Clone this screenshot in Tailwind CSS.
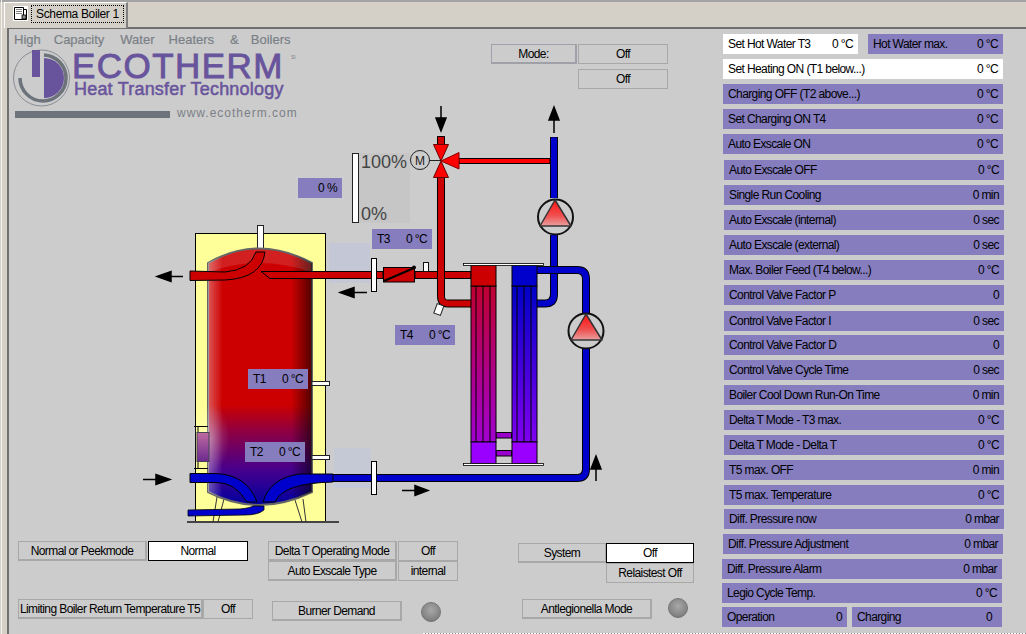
<!doctype html>
<html><head><meta charset="utf-8"><script src="https://cdn.jsdelivr.net/npm/@tailwindcss/browser@4"></script></head>
<body class="m-0 overflow-hidden bg-[#d4d0c8] font-['Liberation_Sans',Arial,sans-serif] text-[12px] tracking-[-.6px] whitespace-nowrap text-black">
<div class="relative w-[1026px] h-[634px] overflow-hidden">
  <div class="absolute left-0 top-0 w-full h-[2px] bg-[#a4a4a4]"></div>
  <div class="absolute left-[1px] top-0 w-[1px] h-full bg-[#f4f2ee]"></div>
  <div class="absolute left-[4px] top-[2px] w-[124px] h-[26px] z-10 bg-[#d4d0c8] border-l border-t border-r-2 border-white border-r-[#808080] flex items-start pt-[2px] pl-[8px] gap-[3px]">
    <svg width="15" height="15" viewBox="0 0 15 15" class="mt-[1px]"><rect width="15" height="15" fill="#fff"/><path d="M1.500 1.500 H10.500 V13.500 H1.500 Z" fill="#fff" stroke="#000"/><path d="M3 3.500 H9 M3 5.500 H9 M3 7.500 H9" stroke="#808080"/><path d="M10.500 3.500 H13.500 V13.500 H4" fill="none" stroke="#000"/><rect x="9" y="9" width="4" height="4" fill="#888" stroke="#000" stroke-width=".8"/></svg>
    <span class="border border-dotted border-black px-[4px] h-[18px] leading-[16px] tracking-[-.35px]">Schema Boiler 1</span>
  </div>
  <div class="absolute left-[7px] top-[27px] right-0 bottom-0 bg-[#cccccc] border-t-2 border-l-2 border-[#707070]"></div>
  <div class="absolute left-[423px] bottom-0 right-0 h-px bg-[repeating-linear-gradient(90deg,#ffffff_0,#ffffff_2px,#888888_2px,#888888_3px)]"></div>
  <svg class="absolute left-0 top-0" width="1026" height="634" viewBox="0 0 1026 634">
    <defs>
      <linearGradient id="tv" x1="0" y1="0" x2="0" y2="1">
        <stop offset="0" stop-color="#cc0000"/><stop offset=".61" stop-color="#cc0000"/><stop offset=".71" stop-color="#900040"/><stop offset=".86" stop-color="#48008c"/><stop offset="1" stop-color="#0000a0"/>
      </linearGradient>
      <linearGradient id="ts" x1="0" y1="0" x2="1" y2="0">
        <stop offset="0" stop-color="#fff" stop-opacity=".35"/><stop offset=".14" stop-color="#fff" stop-opacity="0"/><stop offset=".8" stop-color="#000" stop-opacity="0"/><stop offset="1" stop-color="#000" stop-opacity=".6"/>
      </linearGradient>
      <linearGradient id="hl" x1="0" y1="0" x2="0" y2="1"><stop offset="0" stop-color="#c00030"/><stop offset="1" stop-color="#a000d0"/></linearGradient>
      <linearGradient id="hr" x1="0" y1="0" x2="0" y2="1"><stop offset="0" stop-color="#0000c8"/><stop offset="1" stop-color="#8000f0"/></linearGradient>
      <linearGradient id="pump" x1="0" y1="0" x2="0" y2="1"><stop offset="0" stop-color="#ff1010"/><stop offset=".6" stop-color="#f05050"/><stop offset="1" stop-color="#e8a0a0"/></linearGradient>
      <linearGradient id="side" x1="0" y1="0" x2="0" y2="1"><stop offset="0" stop-color="#c06aa0"/><stop offset="1" stop-color="#6a2a90"/></linearGradient>
      <radialGradient id="led" cx=".5" cy=".4" r=".65"><stop offset="0" stop-color="#a8a8a8"/><stop offset=".75" stop-color="#848484"/><stop offset="1" stop-color="#707070"/></radialGradient>
      <radialGradient id="glow" cx=".5" cy=".5" r=".5"><stop offset="0" stop-color="#fff" stop-opacity=".28"/><stop offset="1" stop-color="#fff" stop-opacity="0"/></radialGradient>
    </defs>

    <!-- logo -->
    <circle cx="41.500" cy="78" r="28" fill="none" stroke="#777c85" stroke-width=".8"/>
    <path d="M20 78 A23 23 0 1 0 44 55" fill="none" stroke="#6c737a" stroke-width="3.500"/>
    <path d="M44 58 A20 20 0 0 1 44 98 Z" fill="#68549c"/>
    <rect x="32" y="50" width="8" height="27" fill="#68549c"/>
    <rect x="15" y="111" width="155" height="7" fill="#6c737a"/>

    <!-- % panel -->
    <rect x="359" y="153" width="51" height="70" fill="#c6c6c6"/>
    <rect x="352.500" y="153.500" width="6" height="69" fill="#fff" stroke="#222"/>

    <!-- tank housing -->
    <rect x="195.500" y="233.500" width="130" height="288" fill="#ffff99" stroke="#000"/>
    <line x1="187" y1="522" x2="339" y2="522" stroke="#444" stroke-width="2"/>
    <path d="M217 497 L213 522 M224 499 L218 522 M295 500 L302 522 M303 499 L306 522" stroke="#333" stroke-width="1" fill="none"/>
    <rect x="257.500" y="225.500" width="6" height="25" fill="#fff" stroke="#222"/>
    <path d="M208 263 Q258 234 312 263 L312 492 Q258 518 208 492 Z" fill="url(#tv)" stroke="#666" stroke-width="2"/>
    <path d="M208 263 Q258 234 312 263 L312 492 Q258 518 208 492 Z" fill="url(#ts)"/>
    <ellipse cx="210" cy="438" rx="20" ry="34" fill="url(#glow)"/>
    <path d="M209 263 Q258 236 311 263 L311 272 Q258 254 209 272 Z" fill="#fff" opacity=".12"/>

    <!-- side port -->
    <rect x="197" y="432.500" width="12" height="29" fill="url(#side)" stroke="#445"/>
    <path d="M194 426.500 H208 M194 468.500 H208 M198 427 V432 M198 462 V468" stroke="#000" stroke-width="1" fill="none"/>

    <!-- right sensors -->
    <rect x="312" y="381.500" width="17.500" height="4" fill="#fff" stroke="#222"/>
    <rect x="312" y="455.500" width="17.500" height="4" fill="#fff" stroke="#222"/>

    <!-- pale rects -->
    <rect x="329" y="243" width="41" height="40" fill="#c4c8d6"/>

    <!-- red pipes -->
    <path d="M190 271 L225 272 Q250 270 256 252 L265 252 Q262 278 225 280 L190 280.500 Z" fill="#cc0000" stroke="#000"/>
    <path d="M261 271.500 H383 V278.500 H270 Z" fill="#cc0000" stroke="#000"/>
    <path d="M415 271.500 H471 V278.500 H415 Z" fill="#cc0000" stroke="#000"/>
    <path d="M441 178 V296 Q441 303.500 448 303.500 H471" fill="none" stroke="#000" stroke-width="8"/>
    <path d="M441 178 V296 Q441 303.500 448 303.500 H471" fill="none" stroke="#cc0000" stroke-width="6"/>
    <rect x="423.500" y="262.500" width="5" height="9" fill="#fff" stroke="#111"/>
    <rect x="435.500" y="304.500" width="7" height="10" fill="#fff" stroke="#222" transform="rotate(20 439 309)"/>

    <!-- valve -->
    <rect x="383.500" y="267.500" width="31" height="14.500" fill="#cc0000" stroke="#000"/>
    <line x1="384" y1="281" x2="414" y2="268" stroke="#000" stroke-width="2"/>
    <circle cx="414" cy="267.500" r="2" fill="#000"/>

    <!-- flanges -->
    <rect x="371.500" y="258.500" width="5" height="33" fill="#fff" stroke="#000"/>

    <!-- mixing valve -->
    <rect x="437.500" y="136.500" width="7" height="8" fill="#cc0000" stroke="#000"/>
    <path d="M459 158.500 H550 V163.500 H459 Z" fill="#ff0000" stroke="#000"/>
    <path d="M433.500 144.500 H448.500 L441 161 Z" fill="#ff0000" stroke="#600"/>
    <path d="M433.500 177.500 H448.500 L441 161 Z" fill="#ff0000" stroke="#600"/>
    <path d="M459 152.500 V169 L441 161 Z" fill="#ff0000" stroke="#800"/>
    <line x1="429" y1="160.500" x2="441" y2="160.500" stroke="#222"/>
    <circle cx="420" cy="160" r="9.500" fill="#ccc" stroke="#222"/>
    <text x="420" y="164.500" text-anchor="middle" font-size="12" letter-spacing="0" fill="#222" font-family="Liberation Sans">M</text>

    <!-- blue pipes -->
    <path d="M554 137 V198" fill="none" stroke="#000" stroke-width="8"/>
    <path d="M554 137.500 V198" fill="none" stroke="#0000cc" stroke-width="6"/>
    <path d="M554 235 V294 Q554 303.500 545 303.500 H537" fill="none" stroke="#000" stroke-width="8"/>
    <path d="M554 235 V294 Q554 303.500 545 303.500 H537" fill="none" stroke="#0000cc" stroke-width="6"/>
    <path d="M537 270 H577 Q586 270 586 279 V313" fill="none" stroke="#000" stroke-width="8"/>
    <path d="M537 270 H577 Q586 270 586 279 V313" fill="none" stroke="#0000cc" stroke-width="6"/>
    <path d="M586 349 V469 Q586 478 577 478 H333" fill="none" stroke="#000" stroke-width="8"/>
    <path d="M586 349 V469 Q586 478 577 478 H333" fill="none" stroke="#0000cc" stroke-width="6"/>
    <path d="M333 474 H300 Q270 478 263 502 L275 502 Q283 483 333 482 Z" fill="#0000cc" stroke="#000"/>
    <path d="M190 473.500 H216 Q247 475 257 502 L247 502 Q235 482 216 482.500 H190 Z" fill="#0000cc" stroke="#000"/>
    <path d="M188 510 L240 509 Q250 508 253 506 H264 V510 Q258 515 245 515 L188 516 Z" fill="#0000cc" stroke="#000" stroke-width=".8"/>
    <rect x="334" y="448" width="37" height="40" fill="#c4c8d6" fill-opacity=".9"/>
    <path d="M334 478 H372" stroke="#000" stroke-width="8"/><path d="M334 478 H372" stroke="#0000cc" stroke-width="6"/>
    <rect x="371.500" y="461.500" width="5" height="33" fill="#fff" stroke="#000"/>

    <!-- heat exchanger -->
    <rect x="496" y="432.500" width="15.500" height="5.500" fill="#9900cc" stroke="#000"/>
    <rect x="496" y="450.500" width="15.500" height="5.500" fill="#9900cc" stroke="#000"/>
    <rect x="471" y="286" width="25" height="156" fill="url(#hl)" stroke="#000"/>
    <rect x="512" y="286" width="25" height="156" fill="url(#hr)" stroke="#000"/>
    <path d="M476 286 V442 M483 286 V442 M490 286 V442 M517 286 V442 M524 286 V442 M531 286 V442" stroke="#000" fill="none"/>
    <rect x="471" y="265.500" width="25" height="20.500" fill="#cc0000" stroke="#000"/>
    <rect x="512" y="265.500" width="25" height="20.500" fill="#0000cc" stroke="#000"/>
    <rect x="471" y="442" width="25" height="21.500" fill="#9900ff" stroke="#000"/>
    <rect x="512" y="442" width="25" height="21.500" fill="#9900ff" stroke="#000"/>
    <rect x="463.500" y="263.500" width="80" height="2" fill="#fff" stroke="#000" stroke-width=".8"/>
    <rect x="463.500" y="463.500" width="80" height="2" fill="#fff" stroke="#000" stroke-width=".8"/>

    <!-- pumps -->
    <g fill="#ccc" stroke="#111" stroke-width="2">
      <circle cx="555.500" cy="217" r="17.500"/>
      <circle cx="586" cy="331" r="17.500"/>
    </g>
    <path d="M555 200 L571 226 H540 Z" fill="url(#pump)" stroke="#333" stroke-width="1.500" stroke-linejoin="round"/>
    <path d="M586 314 L602 340 H571 Z" fill="url(#pump)" stroke="#333" stroke-width="1.500" stroke-linejoin="round"/>

    <!-- arrows -->
    <g fill="#000" stroke="#000" stroke-width="1.500">
      <path d="M183 276.500 H170" fill="none"/><path d="M157 276.500 L171 271.500 V281.500 Z"/>
      <path d="M367 292.500 H354" fill="none"/><path d="M340 292.500 L354 287.500 V297.500 Z"/>
      <path d="M143 479.500 H156" fill="none"/><path d="M170 479.500 L156 474.500 V484.500 Z"/>
      <path d="M402 490.500 H415" fill="none"/><path d="M428 490.500 L415 485.500 V495.500 Z"/>
      <path d="M441 106 V119" fill="none"/><path d="M441 131 L436 118 H446 Z"/>
      <path d="M554 133 V120" fill="none"/><path d="M554 107 L549 120 H559 Z"/>
      <path d="M596 481 V468" fill="none"/><path d="M596 456 L591 469 H601 Z"/>
    </g>

    <!-- LEDs -->
    <circle cx="431" cy="612" r="9.500" fill="url(#led)" stroke="#777"/>
    <circle cx="678" cy="608" r="9.500" fill="url(#led)" stroke="#777"/>
  </svg>

  <!-- logo text -->
  <div class="absolute left-[14px] top-[32px] flex text-[13px] leading-[15px] text-[#7b8087] tracking-normal [-webkit-text-stroke:.2px_#7b8087]"><span>High</span><span class="ml-[13px]">Capacity</span><span class="ml-[16px]">Water</span><span class="ml-[14px]">Heaters</span><span class="ml-[16px]">&amp;</span><span class="ml-[12px]">Boilers</span></div>
  <div class="absolute left-[72px] top-[52px] text-[35px] leading-[28px] text-[#68549c] tracking-[1.45px] [-webkit-text-stroke:.9px_#68549c]">ECOTHERM</div>
  <div class="absolute left-[74px] top-[80px] text-[18px] leading-[18px] text-[#68549c] tracking-[.2px] [-webkit-text-stroke:.5px_#68549c]">Heat Transfer Technology</div>
  <div class="absolute left-[177px] top-[106px] text-[12px] leading-[15px] text-[#7b8087] tracking-[1px]">www.ecotherm.com</div>
  <div class="absolute left-[291px] top-[54px] text-[5px] leading-[6px] text-[#7b8087] tracking-normal">SI</div>

  <!-- diagram labels -->
  <div class="absolute left-[361px] top-[151px] text-[18px] leading-[22px] text-[#444] tracking-normal">100%</div>
  <div class="absolute left-[361px] top-[203px] text-[18px] leading-[22px] text-[#444] tracking-normal">0%</div>
  <div class="absolute left-[298px] top-[178px] w-[44px] h-[20px] bg-[#857dbe] flex items-center justify-end pr-[5px]">0 %</div>
  <div class="absolute left-[372px] top-[229px] w-[60px] h-[20px] bg-[#857dbe] flex items-center justify-between px-[5px]"><span>T3</span><span>0 °C</span></div>
  <div class="absolute left-[395px] top-[325px] w-[60px] h-[20px] bg-[#857dbe] flex items-center justify-between px-[5px]"><span>T4</span><span>0 °C</span></div>
  <div class="absolute left-[248px] top-[369px] w-[60px] h-[20px] bg-[#857dbe] flex items-center justify-between px-[5px]"><span>T1</span><span>0 °C</span></div>
  <div class="absolute left-[245px] top-[442px] w-[60px] h-[20px] bg-[#857dbe] flex items-center justify-between px-[5px]"><span>T2</span><span>0 °C</span></div>

  <!-- mode -->
  <div class="absolute left-[491px] top-[44px] w-[86px] h-[20px] pt-px border border-b-2 border-r-2 border-[#a0a0a8] flex items-center justify-center">Mode:</div>
  <div class="absolute left-[578px] top-[44px] w-[90px] h-[20px] border border-[#a8a8a8] flex items-center justify-center">Off</div>
  <div class="absolute left-[578px] top-[69px] w-[90px] h-[20px] border border-[#a8a8a8] flex items-center justify-center">Off</div>

  <!-- bottom controls -->
  <div class="absolute left-[18px] top-[541px] w-[129px] h-[20px] pt-px border border-b-2 border-r-2 border-[#a8a8a8] flex items-center justify-center">Normal or Peekmode</div>
  <div class="absolute left-[148px] top-[541px] w-[100px] h-[20px] bg-white border border-black flex items-center justify-center">Normal</div>
  <div class="absolute left-[268px] top-[541px] w-[129px] h-[20px] pt-px border border-b-2 border-r-2 border-[#a8a8a8] flex items-center justify-center">Delta T Operating Mode</div>
  <div class="absolute left-[398px] top-[541px] w-[60px] h-[20px] border border-[#a8a8a8] flex items-center justify-center">Off</div>
  <div class="absolute left-[268px] top-[561px] w-[129px] h-[20px] pt-px border border-b-2 border-r-2 border-[#a8a8a8] flex items-center justify-center">Auto Exscale Type</div>
  <div class="absolute left-[398px] top-[561px] w-[60px] h-[20px] border border-[#a8a8a8] flex items-center justify-center">internal</div>
  <div class="absolute left-[18px] top-[599px] w-[185px] h-[20px] pt-px border border-b-2 border-r-2 border-[#a8a8a8] flex items-center justify-center">Limiting Boiler Return Temperature T5</div>
  <div class="absolute left-[203px] top-[599px] w-[50px] h-[20px] border border-[#a8a8a8] flex items-center justify-center">Off</div>
  <div class="absolute left-[272px] top-[601px] w-[130px] h-[20px] pt-px border border-b-2 border-r-2 border-[#a8a8a8] flex items-center justify-center">Burner Demand</div>
  <div class="absolute left-[518px] top-[543px] w-[88px] h-[20px] pt-px border border-b-2 border-[#a8a8a8] flex items-center justify-center">System</div>
  <div class="absolute left-[606px] top-[543px] w-[88px] h-[20px] bg-white border border-black flex items-center justify-center">Off</div>
  <div class="absolute left-[606px] top-[563px] w-[88px] h-[20px] border border-[#a8a8a8] flex items-center justify-center">Relaistest Off</div>
  <div class="absolute left-[522px] top-[599px] w-[130px] h-[20px] pt-px border border-b-2 border-r-2 border-[#a8a8a8] flex items-center justify-center">Antlegionella Mode</div>

  <!-- parameter column -->
  <div class="absolute left-[723px] top-[34px] w-[280px] flex flex-col">
    <div class="flex gap-[10px] h-[20px]"><div class="flex-1 bg-white flex items-center justify-between px-[5px]"><span>Set Hot Water T3</span><span>0 °C</span></div><div class="w-[135px] bg-[#857dbe] flex items-center justify-between px-[5px]"><span>Hot Water max.</span><span>0 °C</span></div></div>
    <div class="mt-[5px] h-[20px] bg-white flex items-center justify-between px-[5px]"><span>Set Heating ON (T1 below...)</span><span>0 °C</span></div>
    <div class="mt-[5px] h-[20px] bg-[#857dbe] flex items-center justify-between px-[5px]"><span>Charging OFF (T2 above...)</span><span>0 °C</span></div>
    <div class="mt-[5px] h-[20px] bg-[#857dbe] flex items-center justify-between px-[5px]"><span>Set Charging ON T4</span><span>0 °C</span></div>
    <div class="mt-[5px] h-[20px] bg-[#857dbe] flex items-center justify-between px-[5px]"><span>Auto Exscale ON</span><span>0 °C</span></div>
    <div class="mt-[6px] ml-[1px] -mr-[1px] h-[20px] bg-[#857dbe] flex items-center justify-between px-[5px]"><span>Auto Exscale OFF</span><span>0 °C</span></div>
    <div class="mt-[5px] ml-[1px] -mr-[1px] h-[20px] bg-[#857dbe] flex items-center justify-between px-[5px]"><span>Single Run Cooling</span><span>0 min</span></div>
    <div class="mt-[5px] ml-[1px] -mr-[1px] h-[20px] bg-[#857dbe] flex items-center justify-between px-[5px]"><span>Auto Exscale (internal)</span><span>0 sec</span></div>
    <div class="mt-[5px] ml-[1px] -mr-[1px] h-[20px] bg-[#857dbe] flex items-center justify-between px-[5px]"><span>Auto Exscale (external)</span><span>0 sec</span></div>
    <div class="mt-[5px] ml-[1px] -mr-[1px] h-[20px] bg-[#857dbe] flex items-center justify-between px-[5px]"><span>Max. Boiler Feed (T4 below...)</span><span>0 °C</span></div>
    <div class="mt-[5px] ml-[1px] -mr-[1px] h-[20px] bg-[#857dbe] flex items-center justify-between px-[5px]"><span>Control Valve Factor P</span><span>0</span></div>
    <div class="mt-[6px] ml-[1px] -mr-[1px] h-[20px] bg-[#857dbe] flex items-center justify-between px-[5px]"><span>Control Valve Factor I</span><span>0 sec</span></div>
    <div class="mt-[4px] ml-[1px] -mr-[1px] h-[20px] bg-[#857dbe] flex items-center justify-between px-[5px]"><span>Control Valve Factor D</span><span>0</span></div>
    <div class="mt-[5px] ml-[1px] -mr-[1px] h-[20px] bg-[#857dbe] flex items-center justify-between px-[5px]"><span>Control Valve Cycle Time</span><span>0 sec</span></div>
    <div class="mt-[5px] ml-[1px] -mr-[1px] h-[20px] bg-[#857dbe] flex items-center justify-between px-[5px]"><span>Boiler Cool Down Run-On Time</span><span>0 min</span></div>
    <div class="mt-[5px] ml-[1px] -mr-[1px] h-[20px] bg-[#857dbe] flex items-center justify-between px-[5px]"><span>Delta T Mode - T3 max.</span><span>0 °C</span></div>
    <div class="mt-[5px] ml-[1px] -mr-[1px] h-[20px] bg-[#857dbe] flex items-center justify-between px-[5px]"><span>Delta T Mode - Delta T</span><span>0 °C</span></div>
    <div class="mt-[5px] ml-[1px] -mr-[1px] h-[20px] bg-[#857dbe] flex items-center justify-between px-[5px]"><span>T5 max. OFF</span><span>0 min</span></div>
    <div class="mt-[5px] ml-[1px] -mr-[1px] h-[20px] bg-[#857dbe] flex items-center justify-between px-[5px]"><span>T5 max. Temperature</span><span>0 °C</span></div>
    <div class="mt-[4px] ml-[1px] -mr-[1px] h-[20px] bg-[#857dbe] flex items-center justify-between px-[5px]"><span>Diff. Pressure now</span><span>0 mbar</span></div>
    <div class="mt-[5px] h-[20px] bg-[#857dbe] flex items-center justify-between px-[5px]"><span>Diff. Pressure Adjustment</span><span>0 mbar</span></div>
    <div class="mt-[5px] -ml-[1px] mr-[1px] h-[20px] bg-[#857dbe] flex items-center justify-between px-[5px]"><span>Diff. Pressure Alarm</span><span>0 mbar</span></div>
    <div class="mt-[4px] -ml-[1px] mr-[1px] h-[20px] bg-[#857dbe] flex items-center justify-between px-[5px]"><span>Legio Cycle Temp.</span><span>0 °C</span></div>
    <div class="mt-[4px] -ml-[1px] mr-[1px] h-[20px] flex gap-[5px]"><div class="w-[125px] bg-[#857dbe] flex items-center justify-between px-[5px]"><span>Operation</span><span>0</span></div><div class="flex-1 bg-[#857dbe] flex items-center justify-between pl-[5px] pr-[10px]"><span>Charging</span><span>0</span></div></div>
  </div>
</div>
</body></html>
